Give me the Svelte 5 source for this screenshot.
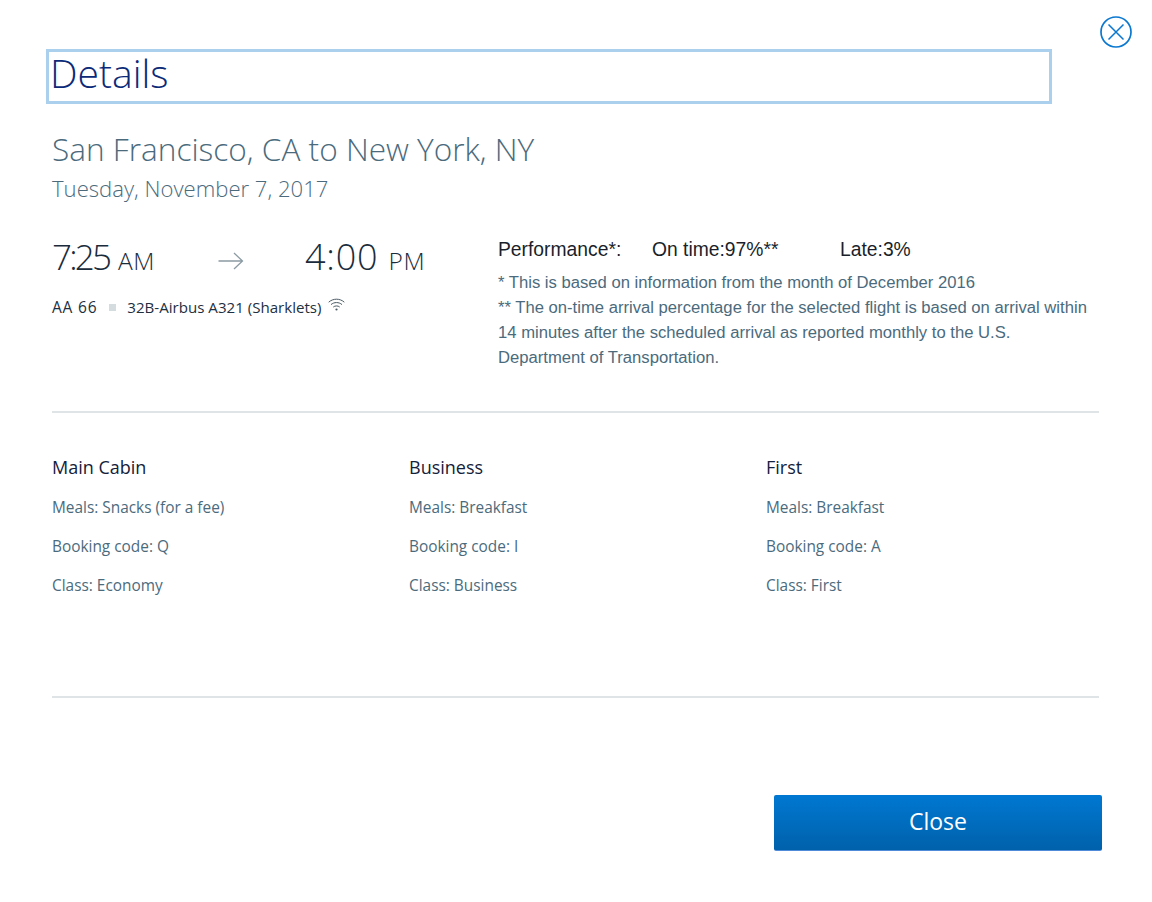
<script>
  const cabins = [
    { name: "Main Cabin", meals: "Snacks (for a fee)", code: "Q", cls: "Economy" },
    { name: "Business", meals: "Breakfast", code: "I", cls: "Business" },
    { name: "First", meals: "Breakfast", code: "A", cls: "First" }
  ];
</script>

<div class="modal">
  <div class="close-row">
    <button class="close-x" aria-label="Close">
      <svg width="32" height="32" viewBox="0 0 32 32" fill="none" stroke="#0b78d0">
        <circle cx="16" cy="16" r="15" stroke-width="1.7" />
        <path d="M8.5 8.5 L23.5 23.5 M23.5 8.5 L8.5 23.5" stroke-width="1.5" />
      </svg>
    </button>
  </div>

  <h1 class="title">Details</h1>

  <h2 class="route">San Francisco, CA to New York, NY</h2>
  <div class="date">Tuesday, November 7, 2017</div>

  <div class="flight">
    <div class="left">
      <div class="times">
        <span class="time depart">7:25<small>AM</small></span>
        <svg class="arrow" width="26" height="18" viewBox="0 0 26 18" fill="none" stroke="#8c9ba3" stroke-width="1.3">
          <path d="M0.5 9 H24.5 M16 1 L24.5 9 L16 17" />
        </svg>
        <span class="time arrive">4:00<small>PM</small></span>
      </div>
      <div class="aircraft">
        <span class="number">AA 66</span>
        <i class="dot"></i>
        <span class="plane">32B-Airbus A321 (Sharklets)</span>
        <svg class="wifi" width="17" height="14" viewBox="0 0 17 14" fill="none" stroke="#4a5a64" stroke-width="1">
          <path d="M0.7 4.2 C5 0.2 12 0.2 16.3 4.2" />
          <path d="M3 6.6 C6 3.9 11 3.9 14 6.6" />
          <path d="M5.3 9 C7 7.6 10 7.6 11.7 9" />
          <circle cx="8.5" cy="11.5" r="1.1" fill="#4a5a64" stroke="none" />
        </svg>
      </div>
    </div>
    <div class="perf">
      <div class="perf-head">
        <span class="p1">Performance*:</span>
        <span class="p2">On time:97%**</span>
        <span>Late:3%</span>
      </div>
      <p>* This is based on information from the month of December 2016</p>
      <p>** The on-time arrival percentage for the selected flight is based on arrival within<br />14 minutes after the scheduled arrival as reported monthly to the U.S.<br />Department of Transportation.</p>
    </div>
  </div>

  <div class="cabins">
    {#each cabins as c}
      <div class="cabin">
        <h3>{c.name}</h3>
        <div>Meals: {c.meals}</div>
        <div>Booking code: {c.code}</div>
        <div>Class: {c.cls}</div>
      </div>
    {/each}
  </div>

  <div class="footer">
    <button class="close-btn">Close</button>
  </div>
</div>

<style>
  :global(body) {
    background: #fff;
  }

  .modal {
    width: 1152px;
    height: 902px;
    box-sizing: border-box;
    padding: 16px 53px 0 52px;
    font-family: "Open Sans", "Liberation Sans", sans-serif;
    color: #4b6b7d;
  }

  .close-row {
    display: flex;
    justify-content: flex-end;
    height: 33px;
    margin-right: -33px;
  }

  .close-x {
    padding: 0;
    border: 0;
    background: none;
    width: 32px;
    height: 32px;
  }

  .title {
    margin: 0 0 0 -6px;
    width: 1006px;
    height: 55px;
    box-sizing: border-box;
    border: 3px solid #aad0ee;
    padding-left: 1px;
    font-size: 39px;
    line-height: 41px;
    font-weight: 300;
    color: #0b2a78;
  }

  .route {
    margin: 23px 0 0;
    font-size: 31.6px;
    line-height: 44px;
    font-weight: 300;
  }

  .date {
    margin-top: 2px;
    font-size: 22.1px;
    line-height: 30px;
    font-weight: 300;
  }

  .flight {
    display: flex;
    margin-top: 31px;
    height: 179px;
    border-bottom: 2px solid #dfe4e6;
    box-sizing: border-box;
  }

  .left {
    width: 446px;
  }

  .times {
    display: flex;
    align-items: center;
    height: 44px;
    margin-top: 3px;
    color: #1a2c3c;
  }

  .time {
    font-size: 36px;
    font-weight: 300;
    line-height: 44px;
    white-space: nowrap;
  }

  .depart {
    width: 166px;
    font-size: 35px;
    letter-spacing: -2.8px;
  }

  .arrive {
    letter-spacing: 0.8px;
  }

  .time small {
    font-size: 24.5px;
    letter-spacing: 0.5px;
    margin-left: 9px;
  }

  .arrive small {
    margin-left: 10px;
    letter-spacing: 0.7px;
  }

  .arrow {
    margin: 3px 61px 0 0;
  }

  .aircraft {
    display: flex;
    align-items: center;
    margin-top: 15px;
    line-height: 22px;
    color: #1d2f40;
  }

  .number {
    font-size: 15.5px;
    letter-spacing: 0.8px;
  }

  .plane {
    font-size: 15.1px;
  }

  .dot {
    width: 7px;
    height: 7px;
    margin: 0 11px 0 12px;
    background: #d5dce0;
  }

  .wifi {
    margin: -5px 0 0 6px;
  }

  .perf {
    font-family: "Liberation Sans", sans-serif;
    font-size: 16.65px;
    line-height: 25px;
  }

  .perf-head {
    display: flex;
    margin: 3px 0 7px;
    font-size: 19.3px;
    color: #1a1f2b;
    line-height: 26px;
  }

  .p1 {
    width: 154px;
  }

  .p2 {
    width: 188px;
  }

  .perf p {
    margin: 0;
    white-space: nowrap;
  }

  .cabins {
    display: grid;
    grid-template-columns: repeat(3, 357px);
    height: 285px;
    padding-top: 43px;
    box-sizing: border-box;
    border-bottom: 2px solid #dfe4e6;
    font-size: 15.4px;
    line-height: 22px;
  }

  .cabin > div {
    margin-top: 17px;
  }

  .cabin h3 {
    margin: 0 0 19px;
    font-size: 18px;
    line-height: 22px;
    font-weight: 400;
    color: #14213a;
  }

  .footer {
    display: flex;
    justify-content: flex-end;
    margin-top: 97px;
  }

  .close-btn {
    width: 328px;
    height: 56px;
    margin-right: -3px;
    padding: 0 0 4px;
    border: 0;
    border-bottom: 1px solid #4f8bd8;
    border-radius: 2px;
    background: linear-gradient(#0078d2, #0061ab);
    color: #fff;
    font-family: inherit;
    font-size: 23px;
    font-weight: 500;
  }
</style>
